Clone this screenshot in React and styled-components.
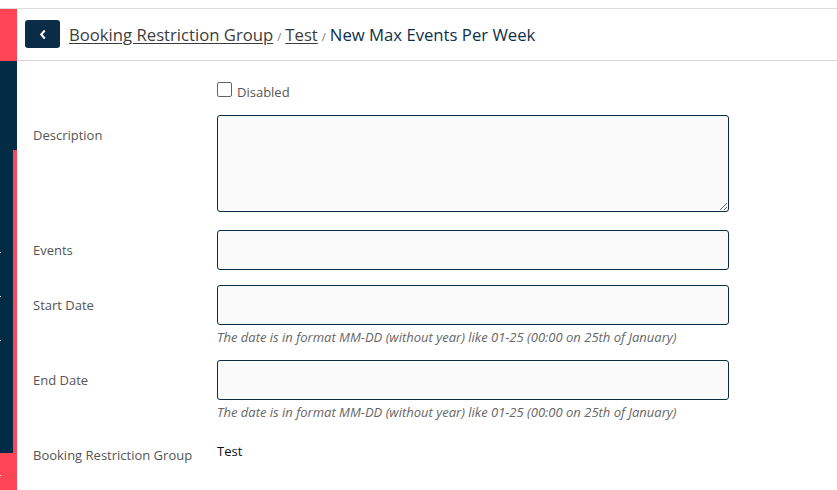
import styled, { createGlobalStyle } from "styled-components";

const GlobalStyle = createGlobalStyle`
  body {
    margin: 0;
    font-family: "Open Sans", "Liberation Sans", sans-serif;
    background: #fff;
  }
`;

const RED = "#fd4556";
const NAVY = "#022b45";

const Page = styled.div`
  display: flex;
  flex-direction: column;
  width: 837px;
  height: 490px;
  overflow: hidden;
`;

const TopStrip = styled.div`
  height: 8px;
  border-bottom: 1px solid #dddddd;
`;

const Main = styled.div`
  display: flex;
  flex: 1;
`;

const Sidebar = styled.aside`
  width: 17px;
  display: flex;
  flex-direction: column;
`;

const SideCap = styled.div`
  height: 52px;
  background: ${RED};
`;

const SideBody = styled.div`
  height: 392px;
  display: flex;
`;

const SideNav = styled.div`
  width: 13px;
  background: ${NAVY};
  display: flex;
  flex-direction: column;
  gap: 43px;
  padding-top: 191px;
  box-sizing: border-box;
`;

const Dot = styled.span`
  display: block;
  width: 1px;
  height: 1px;
  background: #ffffff;
`;

const SideEdge = styled.div`
  flex: 1;
  display: flex;
  flex-direction: column;
`;

const EdgePart = styled.div`
  height: ${(p) => p.$h || "auto"};
  flex: ${(p) => (p.$h ? "none" : 1)};
  background: ${(p) => p.$color};
`;

const SideFoot = styled.div`
  flex: 1;
  background: ${RED};
  padding-top: 22px;
  box-sizing: border-box;
`;

const Content = styled.main`
  flex: 1;
  display: flex;
  flex-direction: column;
`;

const Header = styled.header`
  height: 51px;
  border-bottom: 1px solid #d4d4d4;
  display: flex;
  align-items: center;
  padding-left: 8px;
  gap: 9px;
`;

const BackButton = styled.button`
  width: 35px;
  height: 28px;
  border: none;
  border-radius: 3px;
  background: #0b2c47;
  display: flex;
  align-items: center;
  justify-content: center;
  padding: 0;
  margin-top: -1px;
`;

const Crumbs = styled.div`
  display: flex;
  align-items: baseline;
  font-size: 16.7px;
  margin-top: -1px;
`;

const Crumb = styled.a`
  color: #3d3d3d;
  text-decoration: underline;
  text-decoration-thickness: 1px;
  text-underline-offset: 2px;
`;

const Sep = styled.span`
  font-size: 11px;
  color: #777;
  margin: 0 4px;
`;

const Current = styled.span`
  color: #0d2f4b;
`;

const Form = styled.form`
  padding: 21px 0 0 16px;
  display: flex;
  flex-direction: column;
`;

const Row = styled.div`
  display: grid;
  grid-template-columns: 184px 512px;
  margin-bottom: ${(p) => p.$mb || 0}px;
`;

const Label = styled.label`
  font-size: 13px;
  line-height: 18px;
  color: #555555;
  padding-top: ${(p) => p.$pt ?? 11}px;
`;

const Field = styled.div`
  display: flex;
  flex-direction: column;
`;

const CheckWrap = styled.label`
  display: flex;
  align-items: flex-start;
  gap: 5px;
  font-size: 13px;
  color: #555;
  line-height: 18px;
  height: 15px;
`;

const CheckText = styled.span`
  margin-top: 1px;
`;

const Box = styled.span`
  width: 15px;
  height: 15px;
  flex: none;
  box-sizing: border-box;
  border: 1px solid #5a6670;
  border-radius: 2px;
  background: #fff;
`;

const TextArea = styled.textarea`
  display: block;
  box-sizing: border-box;
  width: 512px;
  height: 97px;
  border: 1px solid #0b2c47;
  border-radius: 3px;
  background: #fafafa;
  margin: 0;
  resize: vertical;
  font-family: inherit;
`;

const Input = styled.input`
  display: block;
  box-sizing: border-box;
  width: 512px;
  height: 40px;
  border: 1px solid #0b2c47;
  border-radius: 3px;
  background: #fafafa;
  margin: 0;
`;

const Hint = styled.div`
  font-size: 13px;
  font-style: italic;
  color: #666;
  line-height: 17px;
  margin-top: 4px;
`;

const Value = styled.div`
  font-size: 13px;
  line-height: 18px;
  color: #111;
`;

const HINT =
  "The date is in format MM-DD (without year) like 01-25 (00:00 on 25th of January)";

export default function App() {
  return (
    <Page>
      <GlobalStyle />
      <TopStrip />
      <Main>
        <Sidebar>
          <SideCap />
          <SideBody>
            <SideNav>
              <Dot />
              <Dot />
              <Dot />
            </SideNav>
            <SideEdge>
              <EdgePart $h="89px" $color={NAVY} />
              <EdgePart $color={RED} />
            </SideEdge>
          </SideBody>
          <SideFoot>
            <Dot />
          </SideFoot>
        </Sidebar>
        <Content>
          <Header>
            <BackButton aria-label="Back">
              <svg width="8" height="11" viewBox="0 0 8 11">
                <path
                  d="M5.8 1.5 L2.2 5.5 L5.8 9.5"
                  fill="none"
                  stroke="#fff"
                  strokeWidth="2"
                />
              </svg>
            </BackButton>
            <Crumbs>
              <Crumb href="#">Booking Restriction Group</Crumb>
              <Sep>/</Sep>
              <Crumb href="#">Test</Crumb>
              <Sep>/</Sep>
              <Current>New Max Events Per Week</Current>
            </Crumbs>
          </Header>
          <Form>
            <Row $mb={18}>
              <span />
              <CheckWrap>
                <Box />
                <CheckText>Disabled</CheckText>
              </CheckWrap>
            </Row>
            <Row $mb={18}>
              <Label>Description</Label>
              <TextArea />
            </Row>
            <Row $mb={15}>
              <Label>Events</Label>
              <Input />
            </Row>
            <Row $mb={14}>
              <Label>Start Date</Label>
              <Field>
                <Input />
                <Hint>{HINT}</Hint>
              </Field>
            </Row>
            <Row $mb={21}>
              <Label>End Date</Label>
              <Field>
                <Input />
                <Hint>{HINT}</Hint>
              </Field>
            </Row>
            <Row>
              <Label $pt={4}>Booking Restriction Group</Label>
              <Value>Test</Value>
            </Row>
          </Form>
        </Content>
      </Main>
    </Page>
  );
}
